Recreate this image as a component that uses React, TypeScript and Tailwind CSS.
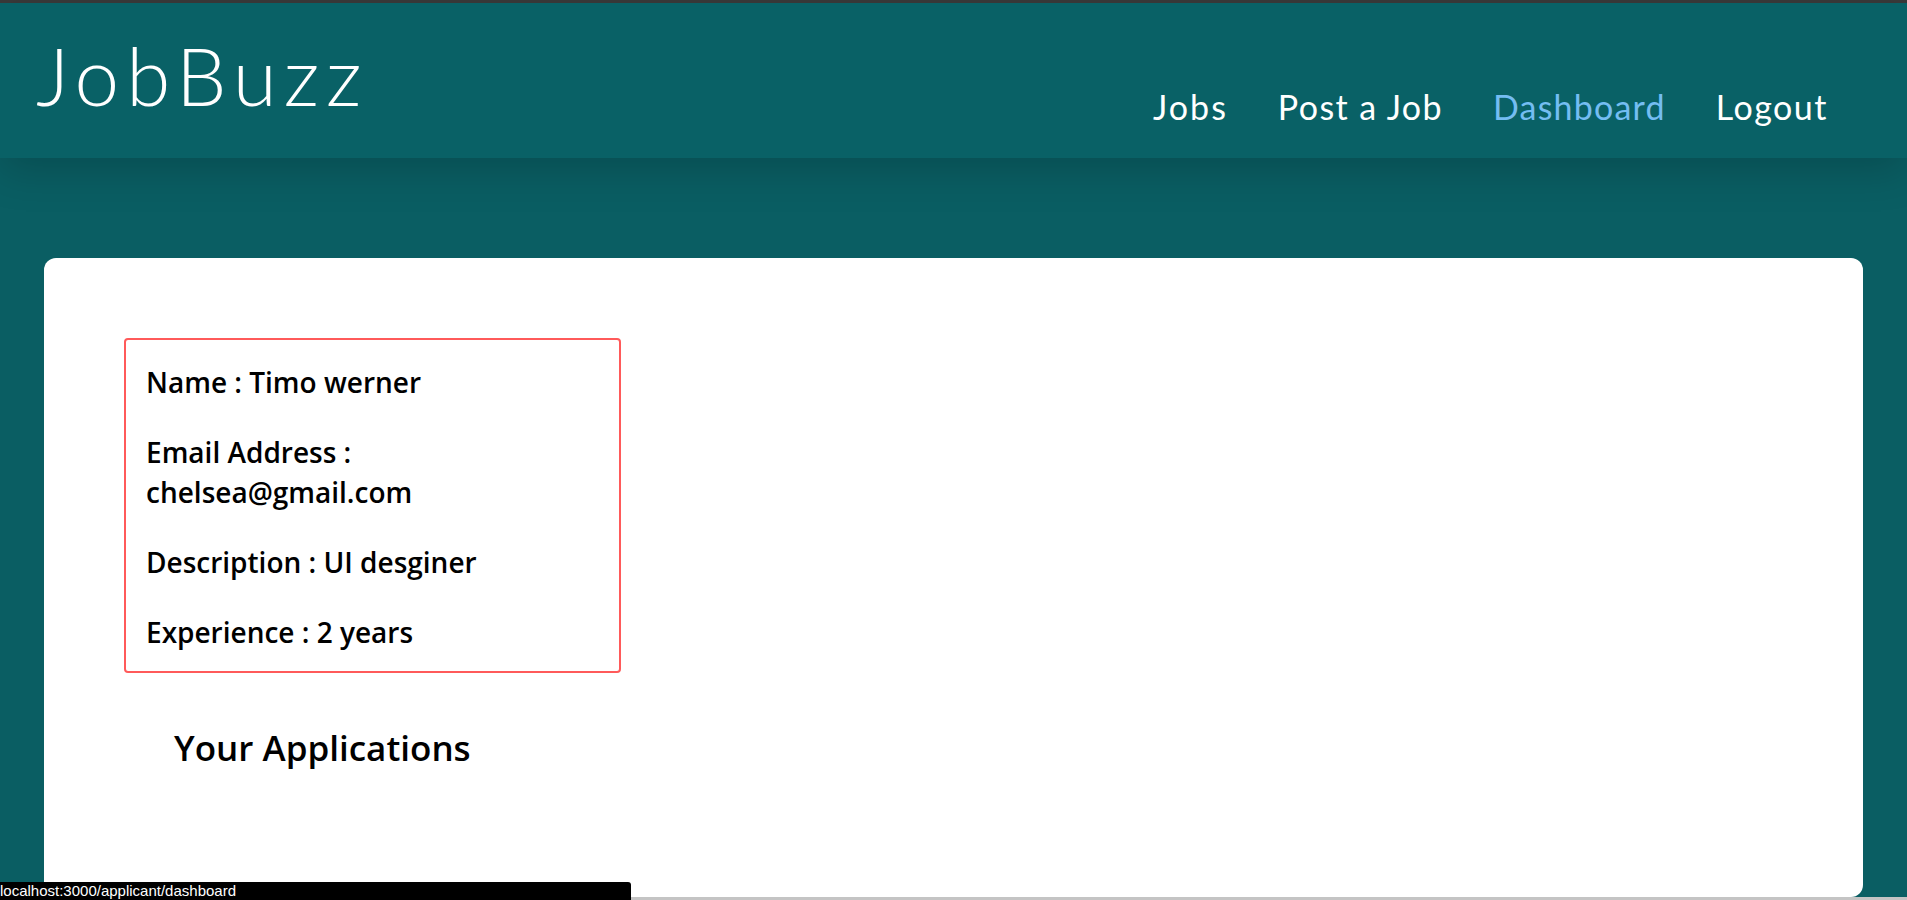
import React from "react";

const navFont = { fontFamily: "Lato, 'Noto Sans', sans-serif" };

export default function App() {
  return (
    <div className="relative h-[900px] w-full overflow-hidden bg-[#0a5e63] flex flex-col">
      <div className="h-[3px] bg-[#3a3a3a] shrink-0" />
      <header
        className="relative z-10 h-[155px] shrink-0 bg-[#096166] flex items-start justify-between pl-[36px] pr-[79px] shadow-[0_12px_40px_rgba(0,0,0,0.18)]"
        style={navFont}
      >
        <div className="pt-[22px] text-[80px] font-light leading-[100px] tracking-[7px] text-white font-['Lato',sans-serif]">
          JobBuzz
        </div>
        <nav className="flex items-center gap-[50px] pt-[83px] text-[34px] leading-[42px] text-white font-['Lato',sans-serif]">
          <a className="tracking-[2px]">Jobs</a>
          <a className="tracking-[1.4px]">Post a Job</a>
          <a className="tracking-[1.2px] text-[#74bdf2]">Dashboard</a>
          <a className="tracking-[1.5px]">Logout</a>
        </nav>
      </header>
      <main className="flex-1 pt-[100px] pl-[44px] pr-[44px] pb-[3px]">
        <div className="h-full rounded-xl bg-white pt-[80px] pl-[80px] font-['Open_Sans',sans-serif] text-black">
          <div className="w-[497px] rounded-[4px] border-2 border-[#ff5a5a] px-[20px] pt-[22px] pb-[19px] flex flex-col gap-[30px] text-[28px] font-semibold leading-[40px]">
            <p>Name : Timo werner</p>
            <p>
              Email Address :
              <br />
              chelsea@gmail.com
            </p>
            <p>Description : UI desginer</p>
            <p>Experience : 2 years</p>
          </div>
          <h2 className="mt-[51px] pl-[50px] text-[35px] font-semibold leading-[48px]">
            Your Applications
          </h2>
        </div>
      </main>
      <div className="absolute bottom-0 left-0 right-0 h-[3px] bg-[#c4c4c4]" />
      <div className="absolute bottom-0 left-0 h-[18px] w-[631px] rounded-tr-[3px] bg-black text-[15px] leading-[18px] text-white font-['Liberation_Sans',sans-serif] overflow-hidden">
        <span>localhost:3000/applicant/dashboard</span>
      </div>
    </div>
  );
}
